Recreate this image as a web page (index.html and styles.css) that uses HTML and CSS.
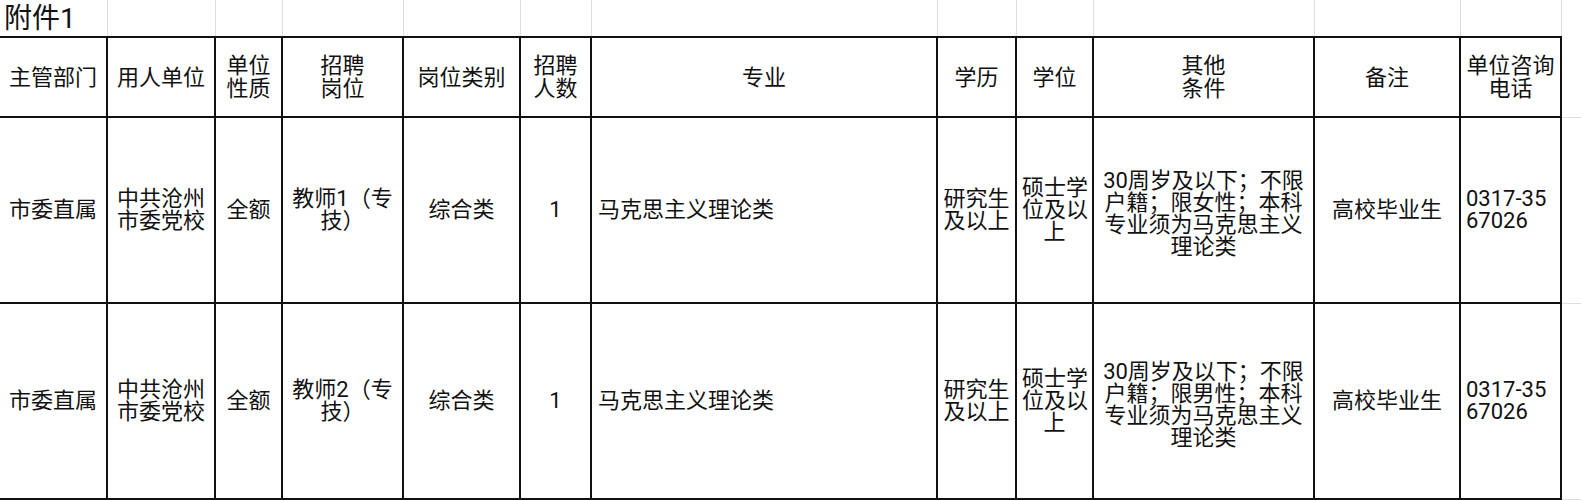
FILE: index.html
```html
<!DOCTYPE html>
<html lang="zh-CN">
<head>
<meta charset="utf-8">
<title>附件1</title>
<link rel="stylesheet" href="styles.css">
</head>
<body>
<table class="sheet">
  <colgroup>
    <col class="w-dept"><col class="w-unit"><col class="w-type"><col class="w-post">
    <col class="w-cat"><col class="w-num"><col class="w-major"><col class="w-edu">
    <col class="w-deg"><col class="w-cond"><col class="w-note"><col class="w-tel">
    <col class="w-fill">
  </colgroup>
  <tbody>
    <tr class="title-row">
      <td class="title">附件1</td>
      <td></td><td></td><td></td><td></td><td></td><td></td>
      <td></td><td></td><td></td><td></td><td></td>
      <td class="fill"></td>
    </tr>
    <tr class="head">
      <th>主管部门</th>
      <th>用人单位</th>
      <th>单位<br>性质</th>
      <th>招聘<br>岗位</th>
      <th>岗位类别</th>
      <th>招聘<br>人数</th>
      <th>专业</th>
      <th>学历</th>
      <th>学位</th>
      <th>其他<br>条件</th>
      <th>备注</th>
      <th>单位咨询<br>电话</th>
      <td class="fill"></td>
    </tr>
    <tr class="data row-1">
      <td>市委直属</td>
      <td>中共沧州<br>市委党校</td>
      <td>全额</td>
      <td>教师1（专<br>技）</td>
      <td>综合类</td>
      <td>1</td>
      <td class="left">马克思主义理论类</td>
      <td>研究生<br>及以上</td>
      <td>硕士学<br>位及以<br>上</td>
      <td class="cond">30周岁及以下；不限<br>户籍；限女性；本科<br>专业须为马克思主义<br>理论类</td>
      <td>高校毕业生</td>
      <td class="left tel">0317-35<br>67026</td>
      <td class="fill"></td>
    </tr>
    <tr class="data row-2">
      <td>市委直属</td>
      <td>中共沧州<br>市委党校</td>
      <td>全额</td>
      <td>教师2（专<br>技）</td>
      <td>综合类</td>
      <td>1</td>
      <td class="left">马克思主义理论类</td>
      <td>研究生<br>及以上</td>
      <td>硕士学<br>位及以<br>上</td>
      <td class="cond">30周岁及以下；不限<br>户籍；限男性；本科<br>专业须为马克思主义<br>理论类</td>
      <td>高校毕业生</td>
      <td class="left tel">0317-35<br>67026</td>
      <td class="fill"></td>
    </tr>
  </tbody>
</table>
</body>
</html>
```

FILE: styles.css
```css
html, body {
  margin: 0;
  padding: 0;
  background: #ffffff;
  overflow: hidden;
}

.sheet {
  border-collapse: collapse;
  table-layout: fixed;
  width: 1600px;
  margin-left: -2px;
  font-family: Roboto, "Noto Sans CJK SC", sans-serif;
  color: #111111;
}

.w-dept { width: 108px; }
.w-unit { width: 108px; }
.w-type { width: 67px; }
.w-post { width: 121px; }
.w-cat { width: 117px; }
.w-num { width: 71px; }
.w-major { width: 346px; }
.w-edu { width: 79px; }
.w-deg { width: 77px; }
.w-cond { width: 221px; }
.w-note { width: 146px; }
.w-tel { width: 101px; }
.w-fill { width: 38px; }

.sheet th,
.sheet td {
  padding: 0 5px;
  font-weight: 400;
  font-size: 22px;
  line-height: 22px;
  text-align: center;
  vertical-align: middle;
  white-space: nowrap;
}

.title-row td {
  height: 35px;
  padding: 0;
  border-right: 1px solid #dedede;
}

.title-row .title {
  text-align: left;
  vertical-align: bottom;
  font-size: 28px;
  line-height: 32px;
  padding: 0 0 1px 5px;
  overflow: visible;
}

.head th,
.data td {
  border: 2px solid #111111;
}

.head th {
  height: 78px;
  line-height: 23px;
}

.row-1 td {
  height: 184px;
}

.row-2 td {
  height: 194px;
}

.data .cond {
  padding-top: 8px;
}

.row-1 .cond {
  height: 176px;
}

.row-2 .cond {
  height: 186px;
}

.data .left {
  text-align: left;
  padding-left: 6px;
}

.data .tel {
  padding-left: 5px;
}

.head .fill,
.data .fill {
  border: none;
  border-bottom: 1px solid #dedede;
}
```
